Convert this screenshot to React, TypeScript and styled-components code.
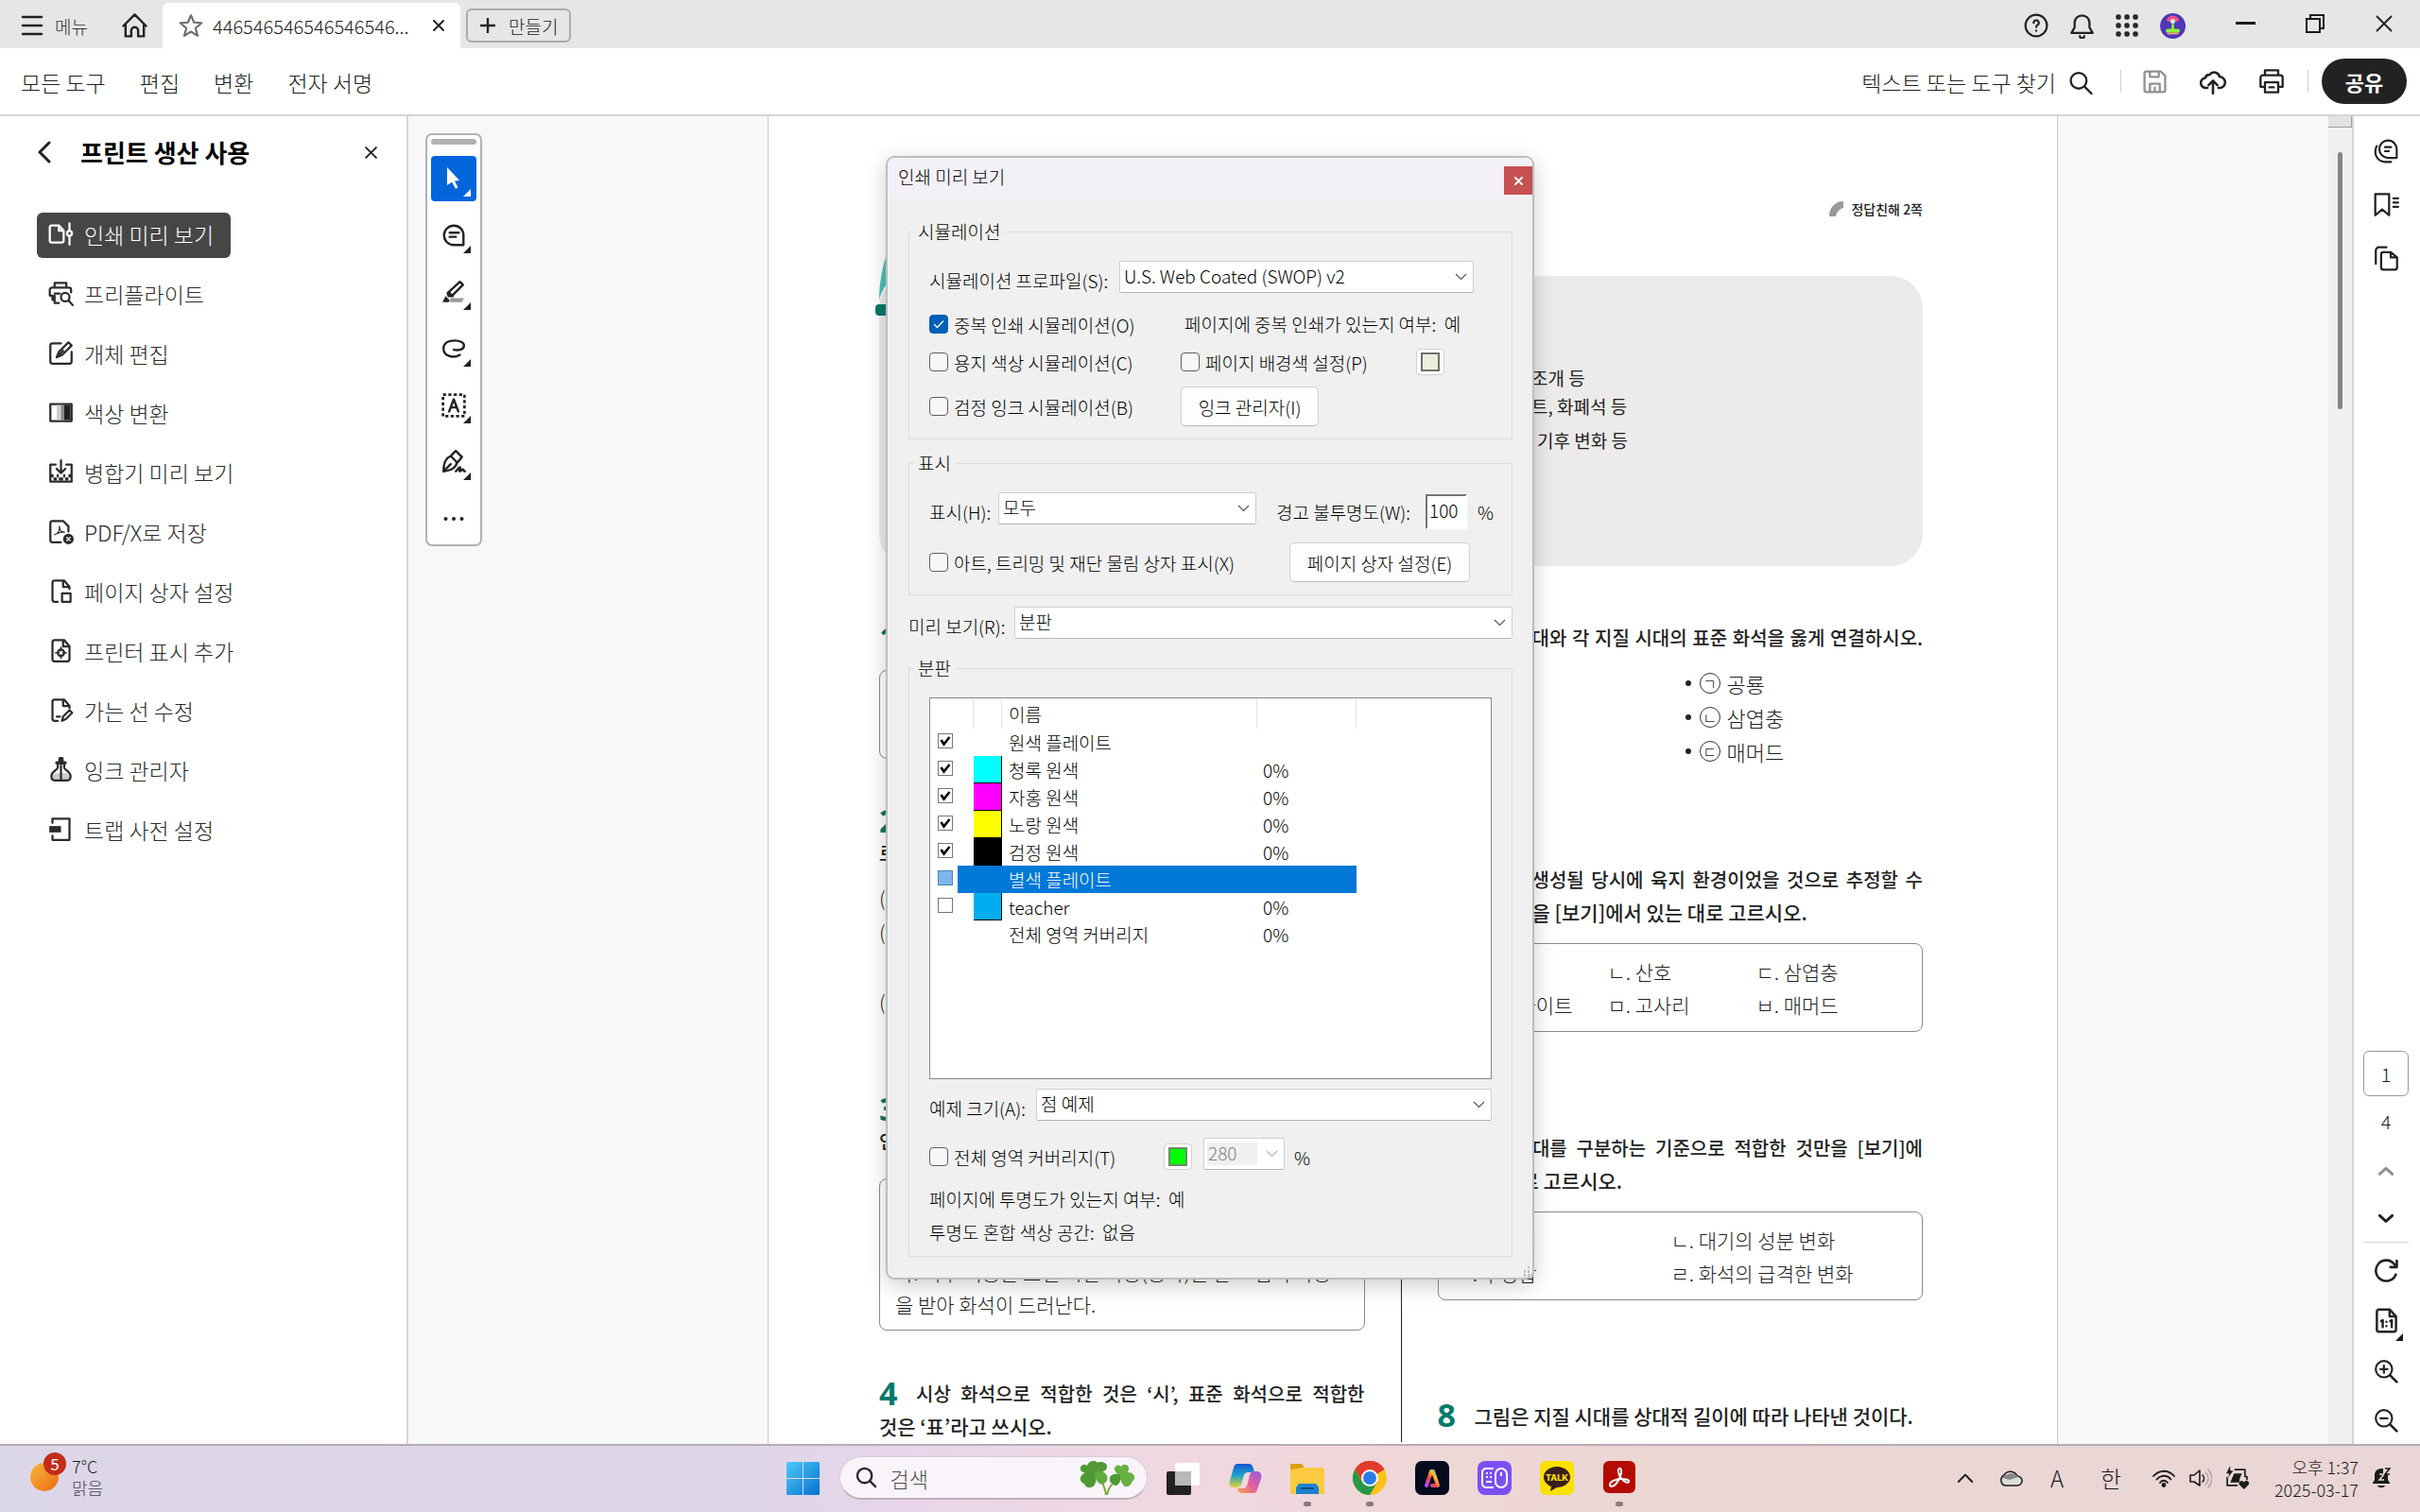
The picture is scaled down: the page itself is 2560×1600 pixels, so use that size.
import React from "react";
import styled, { createGlobalStyle, css } from "styled-components";

const GlobalStyle = createGlobalStyle`
  *, *::before, *::after { box-sizing: border-box; }
  body { margin: 0; overflow: hidden; }
  body, button, input, select, table, legend {
    font-family: "Noto Sans CJK KR", "Noto Sans", sans-serif;
    font-size: 19px;
    font-weight: 300;
    color: #1b1b1b;
  }
  button { border: 0; background: none; padding: 0; margin: 0; }
  h1, h2, p, ul { margin: 0; padding: 0; font-weight: inherit; }
  ul { list-style: none; }
  svg { display: block; flex: none; }
`;

/* ---------- shell ---------- */

const Screen = styled.div`
  display: grid;
  grid-template-rows: auto auto minmax(0, 1fr) auto;
  height: 100vh;
  background: #fff;
`;

const TitleBar = styled.header`
  display: flex;
  height: 51px;
  background: #e6e6e6;
`;

const MenuButton = styled.button`
  display: flex;
  align-items: center;
  gap: 12px;
  padding: 3px 0 0 22px;
  width: 128px;
  color: #333;
`;

const HomeButton = styled.button`
  display: flex;
  align-items: center;
  width: 44px;
  padding-top: 3px;
`;

const DocumentTab = styled.div`
  display: flex;
  align-items: center;
  width: 315px;
  margin-top: 3px;
  padding-left: 17px;
  background: #fff;
  border-radius: 6px 6px 0 0;
`;

const TabName = styled.span`
  flex: 1;
  padding-left: 10px;
  font-size: 20px;
  white-space: nowrap;
`;

const TabClose = styled.button`
  padding: 6px 17px;
`;

const CreateButton = styled.button`
  display: flex;
  align-items: center;
  gap: 14px;
  height: 36px;
  margin: 9px 0 0 6px;
  padding: 0 12px 0 13px;
  border: 2px solid #acacac;
  border-radius: 6px;
`;

const TitleActions = styled.div`
  display: flex;
  margin-left: auto;
  padding-right: 2px;
`;

const TitleAction = styled.button<{ $wide?: boolean }>`
  display: flex;
  justify-content: center;
  align-items: center;
  width: ${(p) => (p.$wide ? 73 : 48)}px;
  padding-top: ${(p) => (p.$wide ? 0 : 3)}px;
`;

const WindowActions = styled.div`
  display: flex;
  height: 49px;
  margin-left: 17px;
`;

const Toolbar = styled.nav`
  display: flex;
  align-items: center;
  height: 72px;
  padding: 0 14px 0 22px;
  border-bottom: 2px solid #d5d5d5;
`;

const ToolbarMenus = styled.div`
  display: flex;
  gap: 36px;
  margin-right: auto;
`;

const ToolbarText = styled.button`
  display: flex;
  align-items: center;
  gap: 14px;
  padding-top: 2px;
  font-size: 23px;
  line-height: 34px;
  color: #222;
`;

const ToolbarIcon = styled.button`
  display: flex;
  justify-content: center;
  width: 62px;
`;

const ToolbarDivider = styled.span<{ $left: number; $right: number }>`
  width: 1px;
  height: 24px;
  margin: 0 ${(p) => p.$right}px 0 ${(p) => p.$left}px;
  background: #cfcfcf;
`;

const ShareButton = styled.button`
  width: 90px;
  height: 48px;
  border-radius: 24px;
  background: #222;
  color: #fff;
  font-size: 22px;
  font-weight: 700;
`;

const Workspace = styled.main`
  display: flex;
  min-height: 0;
`;

/* ---------- left panel ---------- */

const SidePanel = styled.aside`
  flex: 0 0 432px;
  border-right: 2px solid #d5d5d5;
  padding: 20px 0 0 39px;
`;

const PanelHeader = styled.div`
  display: flex;
  align-items: center;
  height: 36px;
`;

const PanelTitle = styled.h1`
  flex: 1;
  padding-left: 28px;
  font-size: 26px;
  line-height: 36px;
  font-weight: 700;
  color: #000;
`;

const PanelClose = styled.button`
  margin-right: 31px;
`;

const ToolList = styled.ul`
  display: flex;
  flex-direction: column;
  align-items: flex-start;
  gap: 15px;
  margin-top: 46px;
`;

const ToolItem = styled.button<{ $active?: boolean }>`
  display: flex;
  align-items: center;
  gap: 11px;
  height: 48px;
  padding: 0 18px 3px 12px;
  border-radius: 6px;
  font-size: 23px;
  color: ${(p) => (p.$active ? "#fff" : "#2c2c2c")};
  background: ${(p) => (p.$active ? "#464646" : "transparent")};
`;

/* ---------- canvas ---------- */

const Canvas = styled.section`
  position: relative;
  display: flex;
  flex: 1;
  align-items: flex-start;
  min-width: 0;
  padding: 0 286px 0 18px;
  background: #f8f8f8;
  overflow: hidden;
`;

const Palette = styled.div`
  display: flex;
  flex-direction: column;
  align-items: center;
  gap: 12px;
  flex: 0 0 60px;
  margin-top: 18px;
  padding: 4px 0 3px;
  border: 2px solid #b1b1b1;
  border-radius: 7px;
  background: #fff;
`;

const PaletteGrip = styled.span`
  width: 48px;
  height: 6px;
  border-radius: 3px;
  background: #b1b1b1;
`;

const PaletteButton = styled.button<{ $active?: boolean }>`
  position: relative;
  display: grid;
  place-items: center;
  width: 48px;
  height: 48px;
  border-radius: 4px;
  color: ${(p) => (p.$active ? "#fff" : "#222")};
  background: ${(p) => (p.$active ? "#0265dc" : "transparent")};
`;

const Corner = styled.span`
  position: absolute;
  right: 6px;
  bottom: 5px;
  border: 4px solid transparent;
  border-right-color: currentColor;
  border-bottom-color: currentColor;
`;

const PdfPage = styled.article`
  flex: 1;
  min-width: 0;
  height: 1800px;
  margin-left: 302px;
  padding: 86px 142px 0 117px;
  border: solid #c9c9c9;
  border-width: 0 1px;
  background: #fff;
  color: #222;
`;

const PageNote = styled.p`
  display: flex;
  justify-content: flex-end;
  align-items: center;
  gap: 7px;
  font-size: 14px;
  font-weight: 500;
  line-height: 24px;
`;

const Summary = styled.div`
  position: relative;
  margin-top: 59px;
  padding: 93px 0 118px 690px;
  border-radius: 34px;
  background: #ecebea;
  font-size: 19px;
  font-weight: 400;
  line-height: 30px;
`;

const SummaryMark = styled.svg`
  position: absolute;
  left: -4px;
  top: -72px;
`;

const SummaryLine = styled.p<{ $spaced?: boolean }>`
  padding: ${(p) => (p.$spaced ? "6px 0 0 6px" : "0")};
`;

const Columns = styled.div`
  display: grid;
  grid-template-columns: minmax(0, 1fr) 1px minmax(0, 1fr);
  column-gap: 38px;
`;

const ColumnRule = styled.div`
  background: #222;
`;

const Column = styled.div`
  padding-top: 59px;
`;

const Question = styled.h2<{ $top?: number }>`
  display: flex;
  margin-top: ${(p) => p.$top ?? 0}px;
  height: 34px;
  font-size: 20px;
  font-weight: 500;
  line-height: 34px;
`;

const QuestionNumber = styled.span`
  flex: 0 0 39px;
  color: #047a68;
  font-family: "Noto Sans", sans-serif;
  font-size: 34px;
  font-weight: 700;
  line-height: 32px;
`;

const QuestionText = styled.span<{ $indent?: number; $justify?: boolean; $large?: boolean }>`
  flex: 1;
  padding-left: ${(p) => p.$indent ?? 0}px;
  font-size: ${(p) => (p.$large ? 21 : 20)}px;
  white-space: nowrap;
  text-align-last: ${(p) => (p.$justify ? "justify" : "left")};
`;

const SubItem = styled.p<{ $top?: number }>`
  margin-top: ${(p) => p.$top ?? 0}px;
  font-size: 21px;
  line-height: 36px;
`;

const bordered = css`
  border: 1px solid #8a8a8a;
  border-radius: 8px;
`;

const PassageBox = styled.div<{ $height: number; $top: number }>`
  ${bordered}
  display: flex;
  flex-direction: column;
  justify-content: flex-end;
  height: ${(p) => p.$height}px;
  margin-top: ${(p) => p.$top}px;
  padding: 0 16px 10px;
  font-size: 21px;
  line-height: 34px;
  white-space: nowrap;
`;

const ChoiceBox = styled.div<{ $columns: string; $gap: number }>`
  ${bordered}
  display: grid;
  grid-template-columns: ${(p) => p.$columns};
  column-gap: ${(p) => p.$gap}px;
  height: 94px;
  margin-top: 16px;
  padding: 12px 0 10px;
  font-size: 21px;
  line-height: 35px;
  white-space: nowrap;
`;

const ChoiceEnd = styled.span`
  text-align: right;
`;

const MatchList = styled.ul`
  margin: 13px 0 0 262px;
  font-size: 22px;
  line-height: 36px;
`;

const MatchItem = styled.li`
  display: flex;
  align-items: center;
  gap: 7px;
  &::before {
    content: "";
    width: 6px;
    height: 6px;
    margin-right: 2px;
    border-radius: 50%;
    background: #222;
  }
`;

const Circled = styled.span`
  display: grid;
  place-items: center;
  width: 22px;
  height: 22px;
  border: 1px solid #333;
  border-radius: 50%;
  font-size: 16px;
  line-height: 20px;
`;

const ScrollTrack = styled.div`
  display: flex;
  flex-direction: column;
  align-items: center;
  flex: 0 0 25px;
  background: #f0f0f0;
`;

const ScrollSplit = styled.span`
  align-self: stretch;
  height: 12px;
  border: solid #a0a0a0;
  border-width: 0 1px 1px 0;
  background: #e2e2e2;
`;

const ScrollThumb = styled.span`
  width: 5px;
  height: 272px;
  margin-top: 26px;
  border-radius: 3px;
  background: #858585;
`;

/* ---------- right rail ---------- */

const Rail = styled.aside`
  display: flex;
  flex-direction: column;
  align-items: center;
  flex: 0 0 72px;
  padding: 9px 2px 0 0;
  border-left: 2px solid #d5d5d5;
`;

const RailButton = styled.button<{ $size: number }>`
  position: relative;
  display: grid;
  place-items: center;
  width: 48px;
  height: ${(p) => p.$size}px;
`;

const RailBottom = styled.div`
  display: flex;
  flex-direction: column;
  align-items: center;
  margin-top: auto;
`;

const PageInput = styled.input`
  width: 48px;
  height: 48px;
  border: 1px solid #999;
  border-radius: 6px;
  text-align: center;
  font-size: 20px;
`;

const PageTotal = styled.span`
  font-size: 20px;
  line-height: 54px;
`;

const RailRule = styled.span`
  width: 48px;
  height: 1px;
  margin-bottom: 3px;
  background: #d8d8d8;
`;

/* ---------- dialog ---------- */

const Dialog = styled.div`
  position: absolute;
  left: 505px;
  top: 42px;
  width: 686px;
  border: 2px solid #bdbdbd;
  border-radius: 9px;
  background: #f0f0f0;
  box-shadow: 0 6px 22px rgba(0, 0, 0, 0.2);
  color: #000;
  overflow: hidden;
`;

const DialogTitle = styled.div`
  display: flex;
  justify-content: space-between;
  height: 43px;
  padding: 0 0 4px 11px;
  background: #f3f0f7;
  line-height: 40px;
`;

const DialogClose = styled.button`
  display: grid;
  place-items: center;
  width: 30px;
  height: 30px;
  margin-top: 9px;
  background: #c75050;
`;

const DialogBody = styled.form`
  display: flex;
  flex-direction: column;
  padding: 23px 21px 22px 22px;
`;

const Group = styled.fieldset<{ $top?: number }>`
  min-width: 0;
  margin: ${(p) => p.$top ?? 0}px 0 0;
  padding: 0;
  border: 1px solid #dcdcdc;
`;

const GroupName = styled.legend`
  margin-left: 5px;
  padding: 0 4px;
  line-height: 24px;
  color: #000;
`;

const GroupBody = styled.div<{ $top?: number }>`
  padding: ${(p) => p.$top ?? 20}px 21px 13px;
`;

const Row = styled.div<{ $top?: number; $align?: string }>`
  display: flex;
  align-items: ${(p) => p.$align ?? "flex-start"};
  margin-top: ${(p) => p.$top ?? 0}px;
`;

const PairRow = styled.div<{ $top: number; $height: number }>`
  display: grid;
  grid-template-columns: 266px 1fr;
  align-items: center;
  height: ${(p) => p.$height}px;
  margin-top: ${(p) => p.$top}px;
`;

const Label = styled.label<{ $width?: number; $left?: number }>`
  flex: 0 0 ${(p) => (p.$width ? `${p.$width}px` : "auto")};
  margin: 8px 0 0 ${(p) => p.$left ?? 0}px;
  line-height: 26px;
  color: #000;
  white-space: pre;
`;

const Line = styled.p<{ $top?: number; $left?: number }>`
  margin-top: ${(p) => p.$top ?? 0}px;
  padding-left: ${(p) => p.$left ?? 0}px;
  line-height: 24px;
  white-space: pre;
`;

const SelectBox = styled.span<{ $width?: number; $left?: number }>`
  position: relative;
  display: flex;
  flex: ${(p) => (p.$width ? `0 0 ${p.$width}px` : "1")};
  height: 34px;
  margin-left: ${(p) => p.$left ?? 0}px;
  svg {
    position: absolute;
    right: 7px;
    top: 13px;
    pointer-events: none;
  }
`;

const NativeSelect = styled.select`
  appearance: none;
  width: 100%;
  height: 34px;
  padding: 0 30px 3px 4px;
  border: 1px solid #cfcfcf;
  border-bottom-color: #b4b4b4;
  border-radius: 2px;
  background: #fff;
  color: #000;
  &:disabled {
    color: #838383;
    opacity: 1;
    background: linear-gradient(#f0f0f0, #f0f0f0) 3px 4px / 53px 24px no-repeat #fff;
  }
`;

const CheckLabel = styled.label<{ $width?: number }>`
  display: flex;
  align-items: center;
  gap: 6px;
  flex: 0 0 ${(p) => (p.$width ? `${p.$width}px` : "auto")};
  height: 28px;
  color: #000;
  white-space: nowrap;
`;

const CheckFrame = styled.span`
  display: grid;
  place-items: center;
  > * { grid-area: 1 / 1; }
  svg { display: none; pointer-events: none; }
  input:checked + svg { display: block; }
`;

const RoundCheck = styled.input`
  appearance: none;
  width: 20px;
  height: 20px;
  margin: 0;
  border: 1px solid #5f5f5f;
  border-radius: 4px;
  background: #f7f7f7;
  &:checked { background: #005fb8; border-color: #005fb8; }
`;

const SquareCheck = styled.input`
  appearance: none;
  width: 16px;
  height: 16px;
  margin: 0;
  border: 1px solid #777;
  background: #fff;
`;

const PushButton = styled.button<{ $width: number }>`
  width: ${(p) => p.$width}px;
  height: 42px;
  border: 1px solid #d0d0d0;
  border-bottom-color: #b9b9b9;
  border-radius: 5px;
  background: #fdfdfd;
  color: #000;
`;

const ColorButton = styled.button<{ $color: string; $border: string }>`
  display: grid;
  place-items: center;
  width: 30px;
  height: 28px;
  border: 1px solid #d0d0d0;
  border-radius: 4px;
  background: #fdfdfd;
  &::before {
    content: "";
    width: 20px;
    height: 20px;
    border: 2px solid ${(p) => p.$border};
    background: ${(p) => p.$color};
  }
`;

const NumberField = styled.input`
  width: 44px;
  height: 37px;
  margin: 2px 0 0;
  padding: 0 0 5px 2px;
  border: 2px solid;
  border-color: #767676 #fff #fff #767676;
  background: #fff;
  color: #000;
`;

const PlateFrame = styled.div`
  height: 404px;
  border: 1px solid #82878f;
  background: #fff;
`;

const PlateTable = styled.table`
  width: 100%;
  table-layout: fixed;
  border-collapse: collapse;
  color: #000;
  th, td { padding: 0; text-align: left; font-weight: 300; line-height: 24px; }
  th { height: 32px; padding-top: 2px; }
  th:not(:last-child) { box-shadow: inset -1px 0 #e2e2e2; }
  td { height: 29px; }
  th:nth-child(3), td:nth-child(3) { padding-left: 7px; }
  td:nth-child(4) { padding-left: 6px; }
`;

const PlateRow = styled.tr<{ $selected?: boolean }>`
  ${(p) =>
    p.$selected &&
    css`
      color: #fff;
      td:nth-child(1) { background: linear-gradient(to right, transparent 29px, #0078d7 29px); }
      td:nth-child(2), td:nth-child(3), td:nth-child(4) { background: #0078d7; }
      input { background: #7eb8ea; border-color: #4c84b4; }
    `}
`;

const CheckCell = styled.td`
  vertical-align: top;
  ${CheckFrame} {
    width: 16px;
    margin: 5px 0 0 8px;
  }
`;

const InkCell = styled.td<{ $ink?: string }>`
  ${(p) =>
    p.$ink &&
    css`
      background: ${p.$ink};
      box-shadow: inset -1px -1px #000;
    `}
`;

const ResizeGrip = styled.svg`
  position: absolute;
  right: 2px;
  bottom: 1px;
`;

/* ---------- taskbar ---------- */

const Taskbar = styled.footer`
  display: grid;
  grid-template-columns: 1fr auto 1fr;
  height: 72px;
  border-top: 2px solid #b6abb2;
  background: linear-gradient(to right, #dcd7e8 0%, #ddd6e8 30%, #e8d5ea 37%, #efd8e2 46%, #efd7da 56%, #ecd6d2 68%, #ead6d5 80%, #ead6d6 100%);
`;

const Weather = styled.button`
  display: flex;
  justify-self: start;
  gap: 12px;
  padding: 10px 0 0 32px;
  text-align: left;
  font-size: 18px;
  line-height: 23px;
`;

const WeatherIcon = styled.span`
  position: relative;
  width: 32px;
  height: 40px;
`;

const WeatherBadge = styled.span`
  position: absolute;
  left: 14px;
  top: -3px;
  width: 24px;
  height: 24px;
  border-radius: 50%;
  background: #c42b1c;
  color: #fff;
  font-size: 17px;
  font-weight: 400;
  line-height: 23px;
  text-align: center;
`;

const Muted = styled.span`
  display: block;
  color: #4d4853;
`;

const TaskApps = styled.div`
  display: flex;
  align-items: flex-start;
  padding-left: 17px;
`;

const StartButton = styled.button`
  margin: 17px 21px 0 0;
`;

const SearchBox = styled.label`
  display: flex;
  align-items: center;
  width: 326px;
  height: 46px;
  margin: 11px 4px 0 0;
  padding: 0 13px 0 16px;
  border: 1px solid #dccbd8;
  border-bottom: 2px solid #bfaebc;
  border-radius: 23px;
  background: #f9f4f9;
`;

const SearchInput = styled.input`
  flex: 1;
  min-width: 0;
  padding: 0 0 0 14px;
  border: 0;
  background: none;
  font-size: 22px;
  &::placeholder { color: #4c4c4c; opacity: 1; }
`;

const AppButton = styled.button<{ $running?: boolean }>`
  display: flex;
  flex-direction: column;
  align-items: center;
  width: 66px;
  padding-top: 16px;
  &::after {
    content: "";
    width: 8px;
    height: 5px;
    margin-top: 7px;
    border-radius: 3px;
    background: ${(p) => (p.$running ? "#857980" : "transparent")};
  }
`;

const Tray = styled.div`
  display: flex;
  justify-content: flex-end;
  align-items: center;
  padding: 0 31px 3px 0;
`;

const TrayButton = styled.button<{ $width: number }>`
  display: grid;
  place-items: center;
  width: ${(p) => p.$width}px;
  font-size: 24px;
  line-height: 34px;
`;

const Clock = styled.button`
  margin-right: 14px;
  width: 106px;
  text-align: right;
  font-size: 18px;
  line-height: 24px;
  white-space: nowrap;
`;

/* ---------- icons ---------- */

type IconProps = { size?: number; sw?: number; color?: string; children: React.ReactNode };

const Icon = ({ size = 26, sw = 2, color = "currentColor", children }: IconProps) => (
  <svg width={size} height={size} viewBox="0 0 24 24" fill="none" stroke={color} strokeWidth={sw} strokeLinecap="round" strokeLinejoin="round" aria-hidden="true">
    {children}
  </svg>
);

const Cross = ({ size = 12, sw = 3, color = "#222" }: { size?: number; sw?: number; color?: string }) => (
  <Icon size={size} sw={sw} color={color}><path d="M2 2l20 20M22 2L2 22" /></Icon>
);

const SheetPath = <path d="M20 10V8l-5-6H6a2 2 0 0 0-2 2v16a2 2 0 0 0 2 2h3M14 2v6h6" />;

const toolIcons = {
  preview: (
    <>
      <path d="M9 4H3a1.500 1.500 0 0 0-1.500 1.500v13A1.500 1.500 0 0 0 3 20h10a1.500 1.500 0 0 0 1.500-1.500V9L10 4v5h4M20 2v7M20 14v8" />
      <circle cx="20" cy="11.500" r="2.300" />
    </>
  ),
  preflight: (
    <>
      <path d="M6 6V2h11v4M6 18H4v-4H1.500V8.500A2 2 0 0 1 3.500 6.500h16a2 2 0 0 1 2 2V11M6 14v7h4M6 12h5" />
      <circle cx="16" cy="15.500" r="4" />
      <path d="M19 18.500l4 4.500" />
    </>
  ),
  edit: (
    <>
      <path d="M12 3H4a2 2 0 0 0-2 2v15a2 2 0 0 0 2 2h16a2 2 0 0 0 2-2v-9" />
      <path d="M8 16l2-5 9-9 3 3-9 9z" />
      <path d="M8 16l6-6" />
    </>
  ),
  convert: (
    <>
      <rect x="2" y="4" width="20" height="16" />
      <path d="M8 5h4v14H8z" fill="#ccc" stroke="none" />
      <path d="M12 5h3v14h-3z" fill="#888" stroke="none" />
      <path d="M15 5h6v14h-6z" fill="#222" stroke="none" />
    </>
  ),
  flatten: (
    <>
      <path d="M7 5H2v16h20V5h-5M12 1v12M8 9l4 4 4-4" />
      <path d="M2 14h3v3H2zM8 14h2v3H8zM14 14h2v3h-2zM19 14h3v3h-3zM5 17h3v3H5zM10 17h4v3h-4zM16 17h3v3h-3z" fill="currentColor" stroke="none" />
    </>
  ),
  pdfx: (
    <>
      <path d="M19 12V7l-5-5H4a2 2 0 0 0-2 2v16a2 2 0 0 0 2 2h8" />
      <path d="M6 15c3-1 5-4 4.500-8 .5 4 2 6 5 5.500-3-.5-6 .5-9.500 2.500z" strokeWidth="1" />
      <circle cx="19" cy="19" r="4" fill="currentColor" />
      <path d="M17.500 17.500l3 3M20.500 17.500l-3 3" stroke="#fff" strokeWidth="1.200" />
    </>
  ),
  boxes: (
    <>
      {SheetPath}
      <path d="M13 14h8v8h-8z" />
    </>
  ),
  marks: (
    <>
      <path d="M20 20V8l-5-6H6a2 2 0 0 0-2 2v16a2 2 0 0 0 2 2h12a2 2 0 0 0 2-2M14 2v6h6" />
      <circle cx="12" cy="14" r="3" />
      <path d="M12 9v3M12 16v3M7 14h3M14 14h3" strokeWidth="1.500" />
    </>
  ),
  hairline: (
    <>
      {SheetPath}
      <path d="M8 18h3M13 22l1-4 6-6 2.500 2.500-6 6z" />
    </>
  ),
  ink: (
    <>
      <path d="M7 15h10l3 2v3l-2 2H6l-2-2v-3z" fill="#ccc" stroke="none" />
      <path d="M9 6v4c0 2-6 4-6 8 0 2 1 4 3 4h12c2 0 3-2 3-4 0-4-6-6-6-8V6M12 8v13" />
      <path d="M8 5.500h8M11 1.500h2v3h-2z" strokeWidth="3" />
    </>
  ),
  trap: (
    <>
      <path d="M4 6V2h16v20H4v-4" />
      <path d="M1 9h11v6H1z" fill="currentColor" stroke="none" />
    </>
  ),
};

const tools: { name: string; icon: keyof typeof toolIcons }[] = [
  { name: "인쇄 미리 보기", icon: "preview" },
  { name: "프리플라이트", icon: "preflight" },
  { name: "개체 편집", icon: "edit" },
  { name: "색상 변환", icon: "convert" },
  { name: "병합기 미리 보기", icon: "flatten" },
  { name: "PDF/X로 저장", icon: "pdfx" },
  { name: "페이지 상자 설정", icon: "boxes" },
  { name: "프린터 표시 추가", icon: "marks" },
  { name: "가는 선 수정", icon: "hairline" },
  { name: "잉크 관리자", icon: "ink" },
  { name: "트랩 사전 설정", icon: "trap" },
];

const paletteIcons = [
  {
    name: "주석",
    icon: (
      <>
        <path d="M12 2.500c6 0 9.500 4.500 9.500 9.500v9.500H12a9.500 9.500 0 0 1 0-19z" />
        <path d="M8 9.500h9M8 13.500h6" />
      </>
    ),
  },
  {
    name: "강조",
    icon: (
      <>
        <path d="M9 18h13l-2 4H8z" fill="#999" stroke="none" />
        <path d="M7 16l-1-3L18 2l3 3L10 16zM7 12l4 4" />
        <path d="M1 22l3-6 4 4-1 2z" fill="currentColor" stroke="none" />
      </>
    ),
  },
  { name: "그리기", icon: <path d="M18 18c-7 4-16 1-16-6 0-6 5-8 11-8 5 0 9 2 9 5 0 4-5 5-10 4" /> },
  {
    name: "텍스트 상자",
    icon: (
      <>
        <path d="M1.500 1.500h21v21h-21z" strokeDasharray="3 2.250" strokeLinecap="butt" strokeWidth="2.500" />
        <path d="M7.500 18L12 6l4.500 12M9 14h6" />
      </>
    ),
  },
  {
    name: "서명",
    icon: (
      <>
        <path d="M2 21c0-8 2-13 7-15l6 6c0 4-4 8-13 9zM2 21l7-7M10 5l4-4 6 6-4 5" />
        <path d="M14 21c2-2 3-4 4-4s-1 4 0 4 2-2 3-2 0 2 2 2" />
      </>
    ),
  },
];

const Chevron = ({ color = "#555" }: { color?: string }) => (
  <svg width="13" height="8" viewBox="0 0 13 8" fill="none" stroke={color} strokeWidth="1.200" aria-hidden="true">
    <path d="M1 1l5.500 5.500L12 1" />
  </svg>
);

const Magnifier = ({ sign }: { sign?: string }) => (
  <Icon size={26} sw={2} color="#222">
    <circle cx="10" cy="10" r="8" />
    <path d="M16 16l6.500 6.500" strokeWidth="2.500" />
    {sign && <path d={sign} />}
  </Icon>
);

/* ---------- form parts ---------- */

type SelectProps = { id: string; value: string; width?: number; left?: number; disabled?: boolean };

const Select = ({ id, value, width, left, disabled }: SelectProps) => (
  <SelectBox $width={width} $left={left}>
    <NativeSelect id={id} defaultValue={value} disabled={disabled} aria-label={disabled ? "커버리지 한도" : undefined}>
      <option>{value}</option>
    </NativeSelect>
    <Chevron color={disabled ? "#b5b5b5" : "#555"} />
  </SelectBox>
);

const Check = ({ text, checked, width }: { text: string; checked?: boolean; width?: number }) => (
  <CheckLabel $width={width}>
    <CheckFrame>
      <RoundCheck type="checkbox" defaultChecked={checked} />
      <svg width="12" height="10" viewBox="0 0 12 10" fill="none" stroke="#fff" strokeWidth="1.300"><path d="M1 5l3.500 3.500L11 1.500" /></svg>
    </CheckFrame>
    {text}
  </CheckLabel>
);

const plates: { name: string; ink?: string; pct?: string; check?: boolean; selected?: boolean }[] = [
  { name: "원색 플레이트", check: true },
  { name: "청록 원색", ink: "#00ffff", pct: "0%", check: true },
  { name: "자홍 원색", ink: "#ff00ff", pct: "0%", check: true },
  { name: "노랑 원색", ink: "#ffff00", pct: "0%", check: true },
  { name: "검정 원색", ink: "#000000", pct: "0%", check: true },
  { name: "별색 플레이트", check: false, selected: true },
  { name: "teacher", ink: "#00aeef", pct: "0%", check: false },
  { name: "전체 영역 커버리지", pct: "0%" },
];

const PreviewDialog = () => (
  <Dialog role="dialog" aria-labelledby="dialog-title">
    <DialogTitle>
      <span id="dialog-title">인쇄 미리 보기</span>
      <DialogClose aria-label="닫기"><Cross size={9} sw={5} color="#fff" /></DialogClose>
    </DialogTitle>
    <DialogBody>
      <Group>
        <GroupName>시뮬레이션</GroupName>
        <GroupBody $top={19}>
          <Row>
            <Label htmlFor="profile" $width={201}>시뮬레이션 프로파일(S):</Label>
            <Select id="profile" value="U.S. Web Coated (SWOP) v2" width={375} />
          </Row>
          <PairRow $top={19} $height={28}>
            <Check text="중복 인쇄 시뮬레이션(O)" checked />
            <Line $left={4}>페이지에 중복 인쇄가 있는지 여부:  예</Line>
          </PairRow>
          <PairRow $top={12} $height={28}>
            <Check text="용지 색상 시뮬레이션(C)" />
            <Row>
              <Check text="페이지 배경색 설정(P)" width={249} />
              <ColorButton type="button" aria-label="배경색" $color="#ededdb" $border="#6f6f6f" />
            </Row>
          </PairRow>
          <PairRow $top={12} $height={42}>
            <Check text="검정 잉크 시뮬레이션(B)" />
            <PushButton type="button" $width={146}>잉크 관리자(I)</PushButton>
          </PairRow>
        </GroupBody>
      </Group>

      <Group $top={13}>
        <GroupName>표시</GroupName>
        <GroupBody $top={19}>
          <Row>
            <Label htmlFor="show" $width={73}>표시(H):</Label>
            <Select id="show" value="모두" width={273} />
            <Label htmlFor="opacity" $width={158} $left={21}>경고 불투명도(W):</Label>
            <NumberField id="opacity" defaultValue="100" />
            <Label as="span" $left={11}>%</Label>
          </Row>
          <Row $top={14} $align="center">
            <Check text="아트, 트리밍 및 재단 물림 상자 표시(X)" width={381} />
            <PushButton type="button" $width={191}>페이지 상자 설정(E)</PushButton>
          </Row>
        </GroupBody>
      </Group>

      <Row $top={12}>
        <Label htmlFor="mode" $width={112}>미리 보기(R):</Label>
        <Select id="mode" value="분판" />
      </Row>

      <Group $top={19}>
        <GroupName>분판</GroupName>
        <GroupBody $top={19}>
          <PlateFrame>
            <PlateTable>
              <colgroup>
                <col width="46" /><col width="30" /><col width="270" /><col width="105" /><col />
              </colgroup>
              <thead>
                <tr><th /><th /><th>이름</th><th /><th /></tr>
              </thead>
              <tbody>
                {plates.map((p) => (
                  <PlateRow key={p.name} $selected={p.selected}>
                    <CheckCell>
                      {p.check !== undefined && (
                        <CheckFrame>
                          <SquareCheck type="checkbox" defaultChecked={p.check} aria-label={p.name} />
                          <svg width="12" height="12" viewBox="0 0 12 12" fill="none" stroke="#000" strokeWidth="2.600"><path d="M1.500 5l3 4.500L10.500 2" /></svg>
                        </CheckFrame>
                      )}
                    </CheckCell>
                    <InkCell $ink={p.ink} />
                    <td>{p.name}</td>
                    <td>{p.pct}</td>
                    <td />
                  </PlateRow>
                ))}
              </tbody>
            </PlateTable>
          </PlateFrame>
          <Row $top={10}>
            <Label htmlFor="sample" $width={113}>예제 크기(A):</Label>
            <Select id="sample" value="점 예제" />
          </Row>
          <Row $top={18} $align="flex-end">
            <Check text="전체 영역 커버리지(T)" width={248} />
            <ColorButton type="button" aria-label="경고 색상" $color="#00ff00" $border="#6b8b6b" />
            <Row>
              <Select id="limit" value="280" width={86} left={12} disabled />
              <Label as="span" $left={10}>%</Label>
            </Row>
          </Row>
          <Line $top={19}>페이지에 투명도가 있는지 여부:  예</Line>
          <Line $top={11}>투명도 혼합 색상 공간:  없음</Line>
        </GroupBody>
      </Group>
    </DialogBody>
    <ResizeGrip width="8" height="11" viewBox="0 0 8 11" fill="#bdbdbd">
      <path d="M5 0h2v2H5zM1 4h2v3H1zM5 4h2v3H5zM1 8h2v3H1zM5 8h2v3H5z" />
    </ResizeGrip>
  </Dialog>
);

const Worksheet = () => (
  <PdfPage>
    <PageNote>
      <svg width="16" height="16" viewBox="0 0 16 16"><path d="M0 16C0 7 6 0 15 0v7c-4 1-7 4-8 9z" fill="#999" /></svg>
      정답친해 2쪽
    </PageNote>
    <Summary>
      <SummaryMark width="60" height="120" viewBox="0 0 60 120">
        <path d="M4 98C4 78 8 60 14 42L60 0v40C30 60 8 78 4 98z" fill="#50bfb2" />
        <rect x="0" y="102" width="60" height="12" rx="4" fill="#047a68" />
      </SummaryMark>
      <SummaryLine>조개 등</SummaryLine>
      <SummaryLine>트, 화폐석 등</SummaryLine>
      <SummaryLine $spaced>기후 변화 등</SummaryLine>
    </Summary>
    <Columns>
      <Column>
        <Question><QuestionNumber>1</QuestionNumber></Question>
        <PassageBox $height={94} $top={17} />
        <Question $top={49}><QuestionNumber>2</QuestionNumber></Question>
        <Question><QuestionText>로</QuestionText></Question>
        <SubItem $top={12}>(1)</SubItem>
        <SubItem>(2)</SubItem>
        <SubItem $top={38}>(3)</SubItem>
        <Question $top={79}><QuestionNumber>3</QuestionNumber></Question>
        <Question><QuestionText>인</QuestionText></Question>
        <PassageBox $height={161} $top={22}>
          <p>다. 이후 지층은 오랜 시간 작용(풍화)을 받고 침식 작용</p>
          <p>을 받아 화석이 드러난다.</p>
        </PassageBox>
        <Question $top={50}>
          <QuestionNumber>4</QuestionNumber>
          <QuestionText $justify>시상 화석으로 적합한 것은 ‘시’, 표준 화석으로 적합한</QuestionText>
        </Question>
        <Question><QuestionText $large>것은 ‘표’라고 쓰시오.</QuestionText></Question>
      </Column>
      <ColumnRule />
      <Column>
        <Question><QuestionText $indent={100} $justify>대와 각 지질 시대의 표준 화석을 옳게 연결하시오.</QuestionText></Question>
        <MatchList>
          <MatchItem><Circled>ㄱ</Circled>공룡</MatchItem>
          <MatchItem><Circled>ㄴ</Circled>삼엽충</MatchItem>
          <MatchItem><Circled>ㄷ</Circled>매머드</MatchItem>
        </MatchList>
        <Question $top={101}><QuestionText $indent={100} $justify>생성될 당시에 육지 환경이었을 것으로 추정할 수</QuestionText></Question>
        <Question><QuestionText $indent={100} $large>을 [보기]에서 있는 대로 고르시오.</QuestionText></Question>
        <ChoiceBox $columns="142px 120px 1fr" $gap={37}>
          <span /><span>ㄴ. 산호</span><span>ㄷ. 삼엽충</span>
          <ChoiceEnd>라이트</ChoiceEnd><span>ㅁ. 고사리</span><span>ㅂ. 매머드</span>
        </ChoiceBox>
        <Question $top={106}><QuestionText $indent={82} $justify>시대를 구분하는 기준으로 적합한 것만을 [보기]에</QuestionText></Question>
        <Question><QuestionText $indent={88} $large>로 고르시오.</QuestionText></Question>
        <ChoiceBox $columns="104px 1fr" $gap={142}>
          <ChoiceEnd>기</ChoiceEnd><span>ㄴ. 대기의 성분 변화</span>
          <ChoiceEnd>ㄷ. 부정합</ChoiceEnd><span>ㄹ. 화석의 급격한 변화</span>
        </ChoiceBox>
        <Question $top={105}>
          <QuestionNumber>8</QuestionNumber>
          <QuestionText $large>그림은 지질 시대를 상대적 길이에 따라 나타낸 것이다.</QuestionText>
        </Question>
      </Column>
    </Columns>
  </PdfPage>
);

/* ---------- taskbar drawings ---------- */

const WindowsLogo = () => (
  <svg width="35" height="35" viewBox="0 0 35 35">
    <defs>
      <linearGradient id="win" x1="0" y1="0" x2="1" y2="1"><stop offset="0" stopColor="#4cc9f8" /><stop offset="1" stopColor="#0671cf" /></linearGradient>
    </defs>
    <path d="M1 0h16v17H0V1zM18 0h16l1 1v16H18zM0 18h17v17H1l-1-1zM18 18h17v16l-1 1H18z" fill="url(#win)" />
  </svg>
);

const Clover = () => (
  <svg width="58" height="36" viewBox="0 0 58 36">
    <path d="M18 14c5 6 9 12 10 22M44 18c-8 4-14 10-15 18" fill="none" stroke="#7fae3c" strokeWidth="2" />
    <g fill="#4f9a35">
      <path d="M17 13C9 14 0 13 1 7c1-4 5-4 7-2 1-5 9-7 11-3 2-2 9-1 10 3 1 5-5 8-12 8z" />
      <path d="M17 12C7 10 0 14 1 20c1 4 4 3 5 6 2 3 8 3 10-1 2-4 2-8 1-13z" />
      <path d="M16 12c0 8 5 14 9 12 4-1 6-6 3-10-2-3-7-4-12-2z" fill="#5fac3e" />
    </g>
    <g fill="#68b044">
      <path d="M44 16c-7-3-9-9-5-11 2-1 4 0 5 1 1-3 7-3 8 1 1 4-3 8-8 9z" />
      <path d="M44 15c-7-3-13 0-12 5 0 4 3 3 5 6 4 1 7-5 7-11z" fill="#4f9a35" />
      <path d="M43 15c5-4 13-4 15 1 1 4-2 5-3 7-1 4-7 6-9 2-2-2-3-6-3-10z" />
    </g>
  </svg>
);

const apps: { name: string; running?: boolean; icon: React.ReactNode }[] = [
  {
    name: "작업 보기",
    icon: (
      <>
        <rect x="1" y="11" width="26" height="25" rx="2" fill="#222" />
        <rect x="10" y="2" width="26" height="24" rx="2" fill="#fff" />
        <path d="M10 11h17v15H10z" fill="#b9b9b9" />
      </>
    ),
  },
  {
    name: "Copilot",
    icon: (
      <>
        <defs>
          <linearGradient id="cpa" x1="0" y1="0" x2="0" y2="1"><stop offset="0" stopColor="#1458d6" /><stop offset=".5" stopColor="#1fa5c9" /><stop offset="1" stopColor="#e8d22c" /></linearGradient>
          <linearGradient id="cpb" x1="1" y1="0" x2="0" y2="1"><stop offset="0" stopColor="#8e5be8" /><stop offset=".5" stopColor="#e0609e" /><stop offset="1" stopColor="#fba04a" /></linearGradient>
        </defs>
        <path d="M10 3h12c3 0 4 2 5 5l1 4h-6c-4 0-5 2-6 6l-2 7c-1 2-2 3-5 3H6c-4 0-5-3-4-7l4-14c1-3 2-4 4-4z" fill="url(#cpa)" />
        <path d="M27 34H15c-3 0-4-2-5-5h5c4 0 5-2 6-6l2-8c1-3 2-4 5-4h3c4 0 5 4 4 8l-4 11c-1 3-2 4-4 4z" fill="url(#cpb)" />
      </>
    ),
  },
  {
    name: "파일 탐색기",
    running: true,
    icon: (
      <>
        <path d="M0 3h12l3 4h-3v6H0z" fill="#dd9c13" />
        <path d="M0 9l14-2h20l2 2v26H0z" fill="#fcc940" />
        <path d="M6 35V28l3-4h18l3 4v7z" fill="#1a82d2" />
        <path d="M11 29h14" stroke="#0c4f8a" strokeWidth="2" />
      </>
    ),
  },
  {
    name: "Chrome",
    running: true,
    icon: (
      <>
        <circle cx="18" cy="18" r="18" fill="#fcc21b" />
        <path d="M18 18L2.400 9A18 18 0 0 1 33.600 9z" fill="#e03b2c" />
        <path d="M18 9h15.600A18 18 0 0 0 2.400 9l8 13z" fill="#e03b2c" />
        <path d="M2.400 9A18 18 0 0 0 18 36l8-14-8 4-8-4z" fill="#279847" />
        <circle cx="18" cy="18" r="9" fill="#fff" />
        <circle cx="18" cy="18" r="7" fill="#2a7bea" />
      </>
    ),
  },
  {
    name: "Adobe Express",
    icon: (
      <>
        <defs>
          <linearGradient id="ax" x1="0" y1="1" x2="1" y2="0"><stop offset="0" stopColor="#b14cf0" /><stop offset=".4" stopColor="#f0454a" /><stop offset=".7" stopColor="#f5c433" /><stop offset="1" stopColor="#2ac5f0" /></linearGradient>
        </defs>
        <rect width="36" height="36" rx="7" fill="#050b1c" />
        <path d="M12 26l5-15h2l5 15h-6" fill="none" stroke="url(#ax)" strokeWidth="4" strokeLinejoin="round" strokeLinecap="round" />
      </>
    ),
  },
  {
    name: "키보드 공유",
    icon: (
      <>
        <rect width="36" height="36" rx="8" fill="#7b4ff2" />
        <g fill="none" stroke="#fff" strokeWidth="2">
          <path d="M17 28H9a4 4 0 0 1-4-4V12a4 4 0 0 1 4-4h8" />
          <rect x="19" y="8" width="12" height="20" rx="6" />
          <path d="M25 12v4" />
          <path d="M9 13h2M13 13h2M9 17h2M13 17h2M9 22h6" />
        </g>
      </>
    ),
  },
  {
    name: "카카오톡",
    icon: (
      <>
        <rect width="36" height="36" rx="6" fill="#fae100" />
        <path d="M18 6c8 0 14 5 14 11s-6 11-14 11l-7 4 1-5c-5-2-8-6-8-10C4 11 10 6 18 6z" fill="#3a1d1d" />
        <text x="18" y="21" fill="#fae100" fontFamily="Inter, sans-serif" fontSize="9" fontWeight="800" textAnchor="middle">TALK</text>
      </>
    ),
  },
  {
    name: "Adobe Acrobat",
    running: true,
    icon: (
      <>
        <rect x="1" width="34" height="34" rx="6" fill="#b30b00" />
        <path d="M8 25c0-3 6-6 12-6 5 0 9 1 8 3s-6 0-9-5c-2-4-3-8-1-9s3 3 1 8c-2 6-6 11-9 11-1 0-2-1-2-2z" fill="none" stroke="#fff" strokeWidth="2" />
      </>
    ),
  },
];

const App = () => (
  <Screen>
    <GlobalStyle />
    <TitleBar>
      <MenuButton>
        <Icon size={24} sw={2.5} color="#222"><path d="M2 3h20M2 12h20M2 21h20" /></Icon>
        메뉴
      </MenuButton>
      <HomeButton aria-label="홈">
        <Icon size={29} sw={2} color="#222"><path d="M2 12L12 2l10 10M4 10v11h5v-5a3 3 0 0 1 6 0v5h5V10" /></Icon>
      </HomeButton>
      <DocumentTab>
        <Icon size={26} sw={2} color="#6e6e6e"><path d="M12 2l3 7 7.500.5-6 5 2 7.500-6.500-4-6.500 4 2-7.500-6-5L9 9z" /></Icon>
        <TabName>446546546546546546...</TabName>
        <TabClose aria-label="탭 닫기"><Cross size={12} sw={4} /></TabClose>
      </DocumentTab>
      <CreateButton>
        <Icon size={16} sw={3.500} color="#222"><path d="M12 1v22M1 12h22" /></Icon>
        만들기
      </CreateButton>
      <TitleActions>
        <TitleAction aria-label="도움말">
          <Icon size={26} color="#222" sw={2}>
            <circle cx="12" cy="12" r="10.500" />
            <path d="M9.500 9.500a2.500 2.500 0 1 1 3.500 2.200c-.7.300-1 .8-1 1.800M12 17v.2" />
          </Icon>
        </TitleAction>
        <TitleAction aria-label="알림">
          <Icon size={27} color="#222" sw={2}><path d="M2 18.500h20l-3-5V9a7 7 0 0 0-14 0v4.500zM10 21.500a2 2 0 0 0 4 0" /></Icon>
        </TitleAction>
        <TitleAction aria-label="앱">
          <Icon size={24} color="#222" sw={2.500}>
            {[3, 12, 21].map((y) => [3, 12, 21].map((x) => <rect key={`${x}-${y}`} x={x - 1.5} y={y - 1.5} width="3" height="3" rx="1" />))}
          </Icon>
        </TitleAction>
        <TitleAction aria-label="프로필">
          <svg width="27" height="27" viewBox="0 0 27 27">
            <circle cx="13.500" cy="13.500" r="13.500" fill="#4f35b8" />
            <path d="M7 8c0-7 13-7 13 0l-3 1h-7z" fill="#f0508a" />
            <circle cx="13.500" cy="8.500" r="2.500" fill="#cdeedd" />
            <path d="M12.500 11h2l.5 6h-3z" fill="#8df03c" />
            <rect x="6" y="16.500" width="15" height="4" rx="2" fill="#8df03c" />
            <path d="M7 20.500h13l-1 2H8z" fill="#e8a86a" />
          </svg>
        </TitleAction>
        <WindowActions>
          <TitleAction $wide aria-label="최소화"><svg width="21" height="3"><rect width="21" height="3" fill="#1b1b1b" /></svg></TitleAction>
          <TitleAction $wide aria-label="이전 크기로">
            <svg width="20" height="20" viewBox="0 0 20 20" fill="none" stroke="#1b1b1b" strokeWidth="2"><path d="M1 5h14v14H1zM5 5V1h14v14h-4" /></svg>
          </TitleAction>
          <TitleAction $wide aria-label="닫기"><Cross size={18} sw={2.500} /></TitleAction>
        </WindowActions>
      </TitleActions>
    </TitleBar>

    <Toolbar>
      <ToolbarMenus>
        {["모든 도구", "편집", "변환", "전자 서명"].map((t) => <ToolbarText key={t}>{t}</ToolbarText>)}
      </ToolbarMenus>
      <ToolbarText>
        텍스트 또는 도구 찾기
        <Icon size={25} sw={2.200}><circle cx="9.500" cy="10" r="8" /><path d="M15.500 16l7 7" /></Icon>
      </ToolbarText>
      <ToolbarDivider $left={29} $right={4} />
      <ToolbarIcon aria-label="저장">
        <Icon size={25} color="#909090" sw={2.200}><path d="M3 1.500h15L22.500 6v14.500a2 2 0 0 1-2 2h-17a2 2 0 0 1-2-2V3A1.500 1.500 0 0 1 3 1.500zM7 2v5h9V2M7 22v-8h10v8M12 18v4" /></Icon>
      </ToolbarIcon>
      <ToolbarIcon aria-label="업로드">
        <Icon size={28} color="#222" sw={2.200}><path d="M7 18H6a4.500 4.500 0 0 1-1-9 4 4 0 0 1 4-3 5 5 0 0 1 9 2 5 5 0 0 1 0 10h-1M12 23V12M8 15.500l4-4 4 4" /></Icon>
      </ToolbarIcon>
      <ToolbarIcon aria-label="인쇄">
        <Icon size={28} color="#222" sw={2}><path d="M6 6.500V2h12v4.500M6 17H2V8.500a2 2 0 0 1 2-2h16a2 2 0 0 1 2 2V17h-4M6 13h12v9H6zM10 17.500h4" /></Icon>
      </ToolbarIcon>
      <ToolbarDivider $left={7} $right={14} />
      <ShareButton>공유</ShareButton>
    </Toolbar>

    <Workspace>
      <SidePanel>
        <PanelHeader>
          <button aria-label="뒤로">
            <svg width="18" height="24" viewBox="0 0 18 24" fill="none" stroke="#222" strokeWidth="3" strokeLinecap="round" strokeLinejoin="round"><path d="M13 2L3 12l10 10" /></svg>
          </button>
          <PanelTitle>프린트 생산 사용</PanelTitle>
          <PanelClose aria-label="패널 닫기"><Cross size={13} sw={3.500} /></PanelClose>
        </PanelHeader>
        <ToolList>
          {tools.map((t, i) => (
            <li key={t.name}>
              <ToolItem $active={i === 0}>
                <Icon size={27} sw={2}>{toolIcons[t.icon]}</Icon>
                {t.name}
              </ToolItem>
            </li>
          ))}
        </ToolList>
      </SidePanel>

      <Canvas>
        <Palette>
          <PaletteGrip />
          <PaletteButton $active aria-label="선택">
            <svg width="16" height="24" viewBox="0 0 16 24"><path d="M1 0l13 14-5 .5 3.500 7-2.500 1.300-4-7L1 19z" fill="#fff" /></svg>
            <Corner />
          </PaletteButton>
          {paletteIcons.map((p) => (
            <PaletteButton key={p.name} aria-label={p.name}>
              <Icon size={26} sw={2.200}>{p.icon}</Icon>
              <Corner />
            </PaletteButton>
          ))}
          <PaletteButton aria-label="더 보기">
            <svg width="22" height="4" viewBox="0 0 22 4" fill="#222"><circle cx="2.500" cy="2" r="2" /><circle cx="11" cy="2" r="2" /><circle cx="19.500" cy="2" r="2" /></svg>
          </PaletteButton>
        </Palette>
        <Worksheet />
        <PreviewDialog />
      </Canvas>

      <ScrollTrack>
        <ScrollSplit />
        <ScrollThumb />
      </ScrollTrack>

      <Rail>
        <RailButton $size={56} aria-label="주석">
          <Icon size={26} color="#222" sw={2}><path d="M14 1.500c5 0 8.500 4 8.500 8.500v8.500H14a8.500 8.500 0 0 1 0-17zM11 8h6M11 12h4M3 7c-3 6-1 15 8 15.500h6" /></Icon>
        </RailButton>
        <RailButton $size={56} aria-label="책갈피">
          <Icon size={27} color="#222" sw={2}><path d="M1.500 2h13v20L8 16.500 1.500 22zM18.500 6H23M18.500 10H23M18.500 14H23" /></Icon>
        </RailButton>
        <RailButton $size={58} aria-label="페이지">
          <Icon size={27} color="#222" sw={2}><path d="M12 1.500H5a3 3 0 0 0-3 3V17M16 6h-7a2 2 0 0 0-2 2v12.500a2 2 0 0 0 2 2h11a2 2 0 0 0 2-2V11zM16 6v5h6" /></Icon>
        </RailButton>
        <RailBottom>
          <PageInput defaultValue="1" aria-label="현재 페이지" />
          <PageTotal>4</PageTotal>
          <RailButton $size={50} aria-label="이전 페이지"><Icon size={16} color="#8f8f8f" sw={4.500}><path d="M2 17l10-9 10 9" /></Icon></RailButton>
          <RailButton $size={50} aria-label="다음 페이지"><Icon size={16} color="#222" sw={4.500}><path d="M2 8l10 9 10-9" /></Icon></RailButton>
          <RailRule />
          <RailButton $size={52} aria-label="회전"><Icon size={25} color="#222" sw={2.500}><path d="M21.500 16A10.500 10.500 0 1 1 20 5.500l2 2M22.500 2v6.500H16" /></Icon></RailButton>
          <RailButton $size={54} aria-label="실제 크기">
            <Icon size={27} color="#222" sw={2.200}><path d="M15 1.500H5a2 2 0 0 0-2 2v17a2 2 0 0 0 2 2h14a2 2 0 0 0 2-2V8zM15 2v6h6M7 12.500l1.500-1V18M15.500 12.500l1.500-1V18M12 13v.2M12 17v.2" /></Icon>
            <Corner />
          </RailButton>
          <RailButton $size={54} aria-label="확대"><Magnifier sign="M10 6.500v7M6.500 10h7" /></RailButton>
          <RailButton $size={50} aria-label="축소"><Magnifier sign="M6.500 10h7" /></RailButton>
        </RailBottom>
      </Rail>
    </Workspace>

    <Taskbar>
      <Weather>
        <WeatherIcon>
          <svg width="30" height="38" viewBox="0 0 30 38">
            <defs><linearGradient id="sun" x1="0" y1="0" x2="1" y2="1"><stop offset="0" stopColor="#f3b83c" /><stop offset="1" stopColor="#ef6a10" /></linearGradient></defs>
            <circle cx="15" cy="23" r="15" fill="url(#sun)" />
          </svg>
          <WeatherBadge>5</WeatherBadge>
        </WeatherIcon>
        <span>7°C<Muted>맑음</Muted></span>
      </Weather>
      <TaskApps>
        <StartButton aria-label="시작"><WindowsLogo /></StartButton>
        <SearchBox>
          <Icon size={23} sw={2.500} color="#2b2530"><circle cx="10" cy="10" r="8" /><path d="M16 16l6 6" /></Icon>
          <SearchInput placeholder="검색" aria-label="검색" />
          <Clover />
        </SearchBox>
        {apps.map((a) => (
          <AppButton key={a.name} $running={a.running} aria-label={a.name}>
            <svg width="36" height="36" viewBox="0 0 36 36">{a.icon}</svg>
          </AppButton>
        ))}
      </TaskApps>
      <Tray>
        <TrayButton $width={48} aria-label="숨겨진 아이콘"><Icon size={16} sw={3}><path d="M1 18L12 7l11 11" /></Icon></TrayButton>
        <TrayButton $width={48} aria-label="OneDrive">
          <svg width="26" height="18" viewBox="0 0 26 18"><path d="M7 17a6 6 0 0 1-1-11 8 8 0 0 1 14 1 5 5 0 0 1 0 10z" fill="#ddd" stroke="#1b1b1b" strokeWidth="1.500" /><path d="M4 9c3-4 12-8 17-1l-9 3z" fill="#888" /></svg>
        </TrayButton>
        <TrayButton $width={50}>A</TrayButton>
        <TrayButton $width={64}>한</TrayButton>
        <TrayButton $width={48} aria-label="Wi-Fi">
          <Icon size={24} sw={1.800}><path d="M1 10c6-7 16-7 22 0M4.500 13.500c4-5 11-5 15 0M8 17c2-3 6-3 8 0" /><circle cx="12" cy="19.500" r="1.500" fill="currentColor" /></Icon>
        </TrayButton>
        <TrayButton $width={30} aria-label="음량">
          <Icon size={24} sw={1.600}><path d="M1 9v7h4l6 4V4L5 9zM14 9c2 2 2 5 0 7" /><path d="M17 6c4 4 4 9 0 13M20 3c5 6 5 13 0 19" stroke="#b6a5a6" /></Icon>
        </TrayButton>
        <TrayButton $width={46} aria-label="배터리">
          <Icon size={25} sw={1.600}>
            <path d="M10 4h10v7h2v3M2 12v8h10" />
            <path d="M9 8h8l-2 4-1 5H5z" fill="currentColor" stroke="none" />
            <path d="M5 0L1 8h3l-1 4 5-7H5z" fill="currentColor" stroke="none" />
            <path d="M19 24l-5-5c-1-4 4-5 5-2 1-3 6-2 5 2z" fill="currentColor" stroke="none" />
          </Icon>
        </TrayButton>
        <Clock>오후 1:37<br />2025-03-17</Clock>
        <svg width="20" height="24" viewBox="0 0 20 24" aria-label="방해 금지">
          <path d="M1 17l2-3V9c0-4 3-7 7-7h2v6h5v6l2 3v1H1zM6 20h8c-1 3-7 3-8 0z" fill="#1b1b1b" />
          <path d="M8 8h5l-5 6h5" fill="none" stroke="#ead6d6" strokeWidth="1.500" />
          <path d="M14 2h5l-5 6h5" fill="none" stroke="#1b1b1b" strokeWidth="1.500" />
        </svg>
      </Tray>
    </Taskbar>
  </Screen>
);

export default App;
